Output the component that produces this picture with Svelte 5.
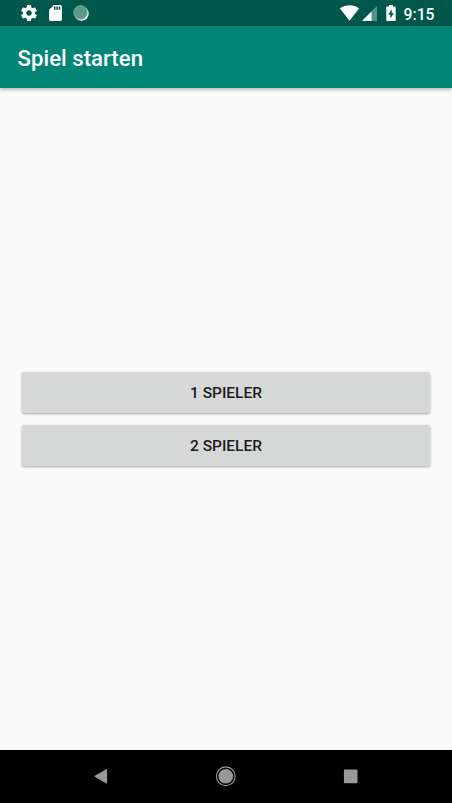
<script>
  const players = ['1 Spieler', '2 Spieler'];
</script>

<div class="screen">
  <div class="status">
    <div class="left">
      <svg class="gear" viewBox="2 2 20 20"><path fill="#fff" d="M19.43 12.98c.04-.32.07-.64.07-.98s-.03-.66-.07-.98l2.11-1.65c.19-.15.24-.42.12-.64l-2-3.46c-.12-.22-.39-.3-.61-.22l-2.49 1c-.52-.4-1.08-.73-1.69-.98l-.38-2.65C14.46 2.18 14.25 2 14 2h-4c-.25 0-.46.18-.49.42l-.38 2.65c-.61.25-1.17.59-1.69.98l-2.49-1c-.23-.09-.49 0-.61.22l-2 3.46c-.13.22-.07.49.12.64l2.11 1.65c-.04.32-.07.65-.07.98s.03.66.07.98l-2.11 1.65c-.19.15-.24.42-.12.64l2 3.46c.12.22.39.3.61.22l2.49-1c.52.4 1.08.73 1.69.98l.38 2.65c.03.24.24.42.49.42h4c.25 0 .46-.18.49-.42l.38-2.65c.61-.25 1.17-.59 1.69-.98l2.49 1c.23.09.49 0 .61-.22l2-3.46c.12-.22.07-.49-.12-.64l-2.11-1.65zM12 15.5c-1.93 0-3.5-1.57-3.5-3.5s1.57-3.5 3.5-3.5 3.5 1.57 3.5 3.5-1.57 3.5-3.5 3.5z"/></svg>
      <svg class="card" viewBox="4 2 16 20"><path fill="#fff" d="M18 2h-8L4.02 8 4 20c0 1.100.9 2 2 2h12c1.100 0 2-.9 2-2V4c0-1.100-.9-2-2-2zm-6 6h-2V4h2v4zm3 0h-2V4h2v4zm3 0h-2V4h2v4z"/></svg>
      <svg class="sync" viewBox="0 0 16 16">
        <circle cx="8.500" cy="8.600" r="7.200" fill="#fff"/>
        <circle cx="7.500" cy="7.400" r="7.100" fill="#5b978c"/>
        <circle cx="7.500" cy="7.400" r="6.600" fill="none" stroke="#8dbab1" stroke-width="1" stroke-dasharray="1 1"/>
      </svg>
    </div>
    <div class="right">
      <svg class="wifi" viewBox="0 0 19 16"><path fill="#fff" d="M9.500 15.800 0 3.500C2.500 1.300 6 .2 9.500.2S16.500 1.300 19 3.500Z"/></svg>
      <svg class="signal" viewBox="0 0 15 15"><path fill="#fff" opacity=".35" d="M0 15 15 0V15Z"/><path fill="#fff" d="M0 15 9.500 5.500V15Z"/></svg>
      <svg class="battery" viewBox="0 0 10 16"><path fill="#fff" d="M3 0H7V1.600H9Q9.700 1.600 9.700 2.400V15.200Q9.700 16 9 16H1Q.3 16 .3 15.200V2.400Q.3 1.600 1 1.600H3Z"/><path fill="#00574b" d="M5.700 4 2.300 9.700H4.400V13.800L7.800 7.900H5.700Z"/></svg>
      <span class="time">9:15</span>
    </div>
  </div>
  <header>Spiel starten</header>
  <main>
    {#each players as label}
      <button>{label}</button>
    {/each}
  </main>
  <nav>
    <svg viewBox="0 0 22 22"><path fill="#999" stroke="#999" stroke-linejoin="round" d="M4.800 11.300 16.600 4.500V18.100Z"/></svg>
    <svg viewBox="0 0 22 22"><circle cx="10.800" cy="11.300" r="9.400" fill="none" stroke="#999" stroke-width="1.200"/><circle cx="10.800" cy="11.300" r="7.300" fill="#999"/></svg>
    <svg viewBox="0 0 22 22"><rect x="3.900" y="4.600" width="13.600" height="13.600" rx="1" fill="#999"/></svg>
  </nav>
</div>

<style>
  :global(body) { margin: 0; }
  .screen {
    width: 452px;
    height: 803px;
    display: flex;
    flex-direction: column;
    overflow: hidden;
    background: #fafafa;
    font-family: Roboto, sans-serif;
    font-weight: 500;
  }
  .status {
    height: 26.400px;
    flex: none;
    display: flex;
    justify-content: space-between;
    align-items: center;
    padding: 0 17.500px 0 20.600px;
    box-sizing: border-box;
    background: #00574b;
    color: #fff;
  }
  .left, .right { display: flex; align-items: center; }
  svg { display: block; flex: none; }
  .gear { width: 16px; height: 16px; }
  .card { width: 13px; height: 16px; margin-left: 12px; }
  .sync { width: 16px; height: 16px; margin-left: 11.700px; }
  .wifi { width: 19px; height: 16px; }
  .signal { width: 15px; height: 15px; margin-left: 3px; }
  .battery { width: 10px; height: 16px; margin: 0 8px 0 9px; }
  .time { font-size: 15.700px; line-height: 18px; padding-top: 3px; }
  header {
    height: 61.400px;
    flex: none;
    display: flex;
    align-items: center;
    padding: 2px 0 0 17.600px;
    box-sizing: border-box;
    background: #008577;
    color: #fff;
    font-size: 22.200px;
    box-shadow: 0 1px 4px rgba(0, 0, 0, .36);
  }
  main {
    flex: 1;
    display: flex;
    flex-direction: column;
    justify-content: center;
    gap: 12px;
    padding: 0 22px;
  }
  button {
    height: 40.800px;
    border: 0;
    padding: 2px 0 0;
    border-radius: 2px;
    background: #d6d8d7;
    color: #1b1b1b;
    font: 500 15.500px Roboto, sans-serif;
    text-transform: uppercase;
    box-shadow: 0 1px 2.500px rgba(0, 0, 0, .34);
  }
  nav {
    height: 53px;
    flex: none;
    display: flex;
    align-items: center;
    justify-content: center;
    gap: 103px;
    padding-bottom: 1px;
    box-sizing: border-box;
    background: #000;
  }
  nav svg { width: 22px; height: 22px; }
</style>
